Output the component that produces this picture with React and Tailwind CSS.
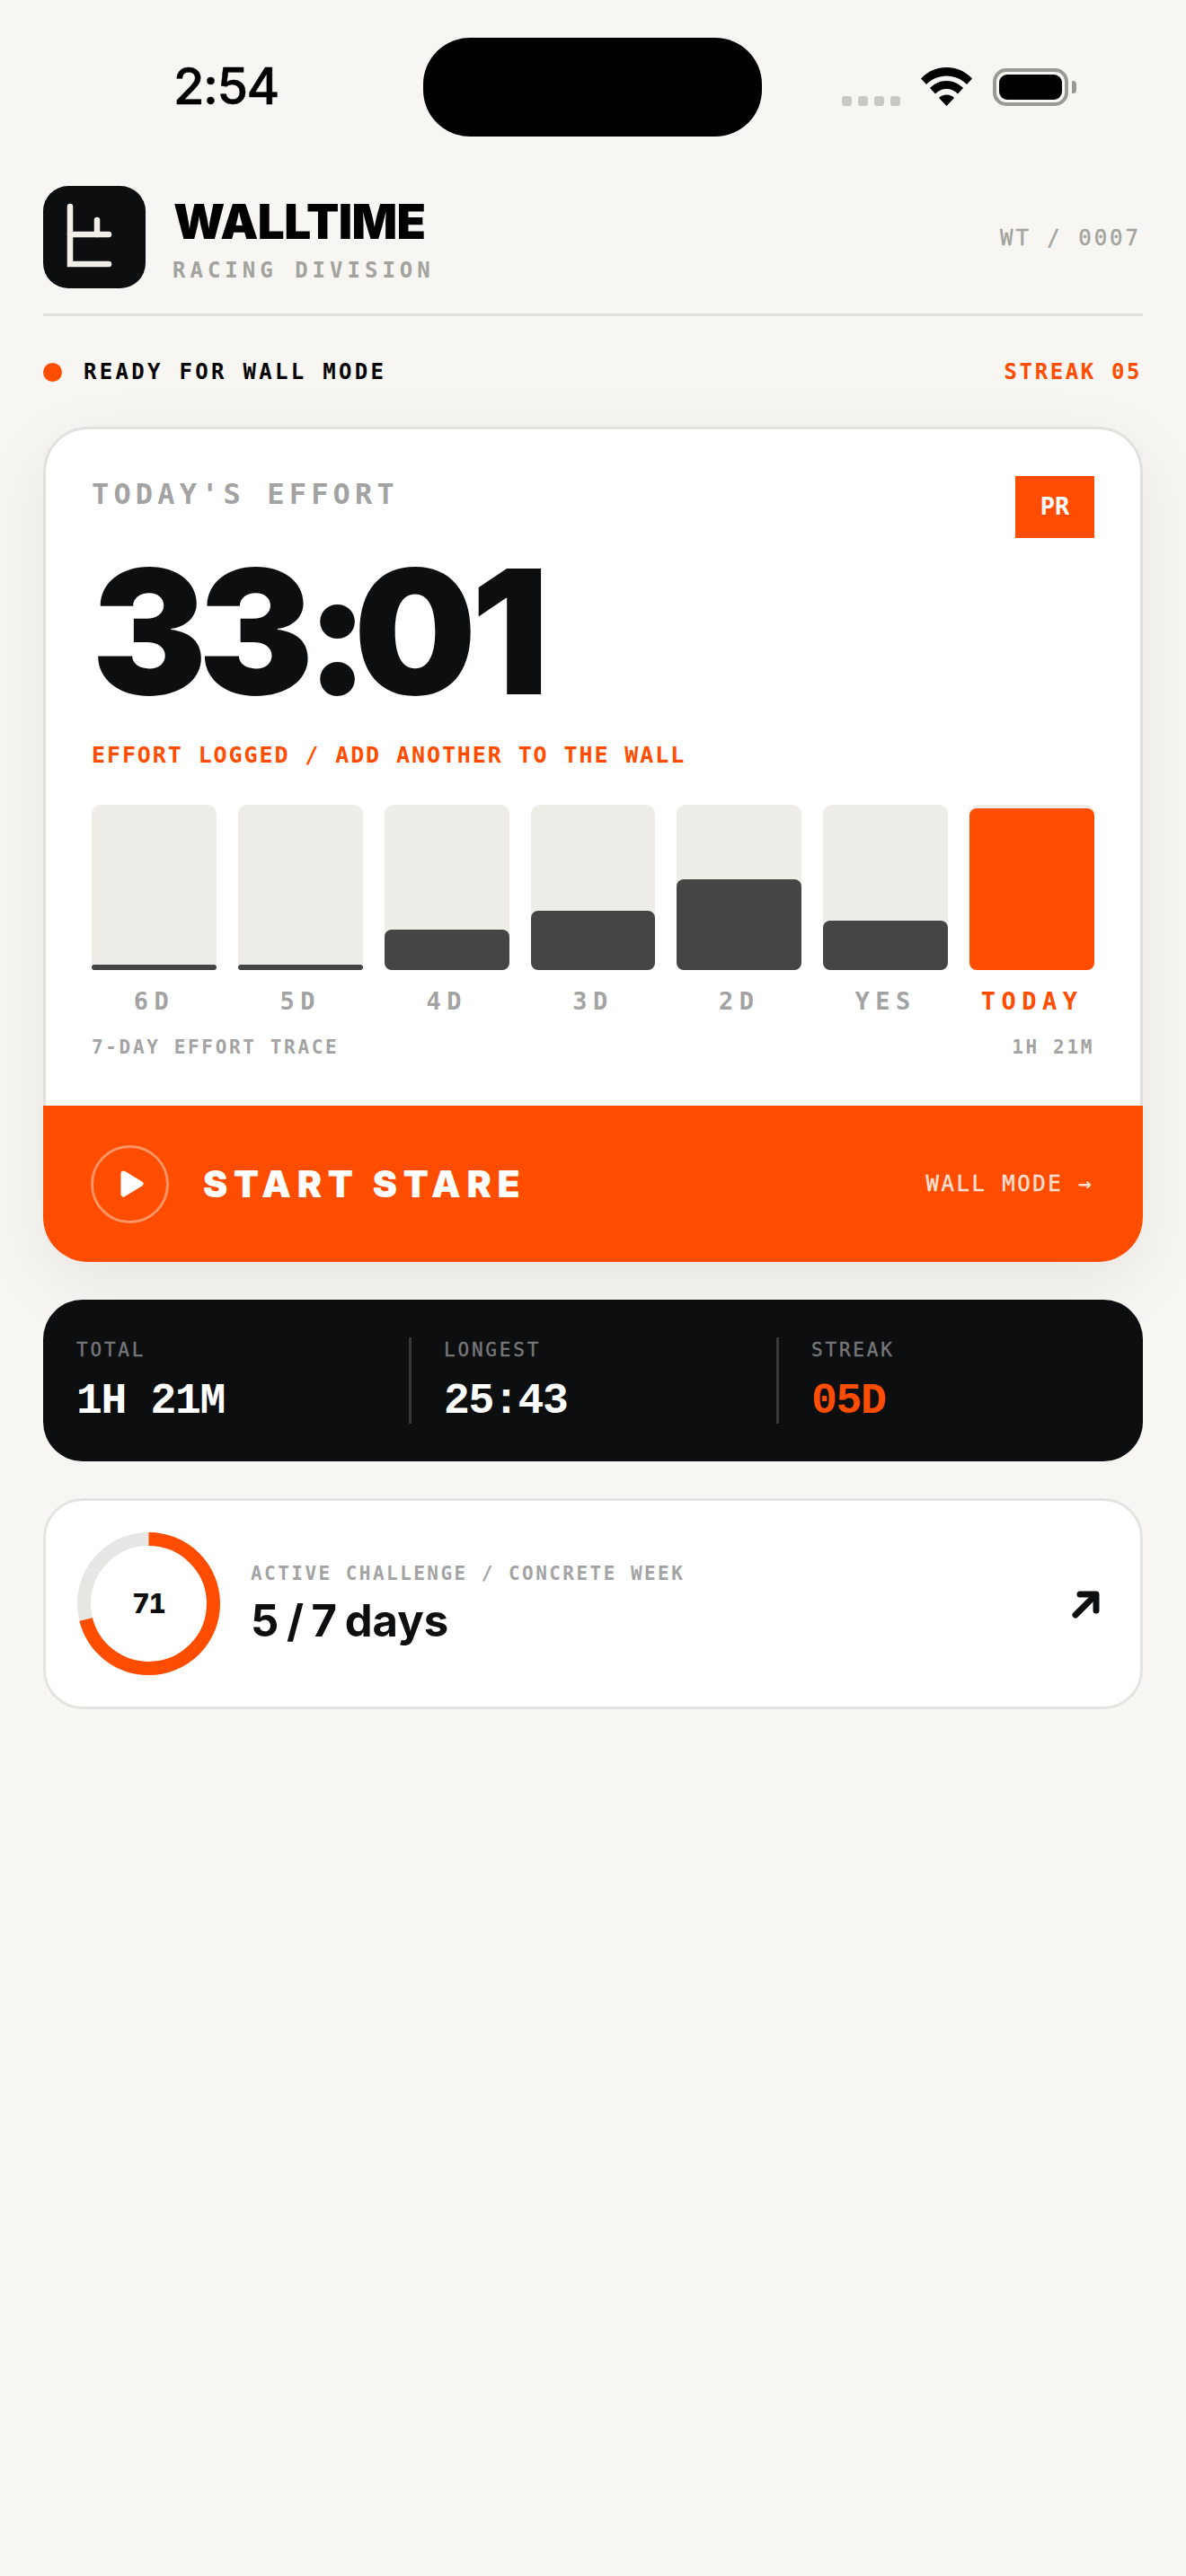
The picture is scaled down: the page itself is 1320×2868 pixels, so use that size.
const bars = [
  { label: '6D', fill: 6 },
  { label: '5D', fill: 6 },
  { label: '4D', fill: 45 },
  { label: '3D', fill: 66 },
  { label: '2D', fill: 101 },
  { label: 'YES', fill: 55 },
  { label: 'TODAY', fill: 180, today: true },
];

const stats = [
  { label: 'TOTAL', value: '1H 21M', width: 'w-[370px]' },
  { label: 'LONGEST', value: '25:43', width: 'w-[409px]', divider: true },
  { label: 'STREAK', value: '05D', accent: true, divider: true },
];

function StatusBar() {
  return (
    <div className="flex items-start pt-[42px] h-[207px]">
      <div className="w-[423px] pl-[145px] pt-[24px] font-['Inter',sans-serif] text-[56px] leading-[60px] font-medium tracking-[-1.5px] [-webkit-text-stroke:0.5px_#000] text-black">
        2:54
      </div>
      <div className="w-[377px] h-[110px] rounded-[52px] bg-black" />
      <div className="flex items-end ml-[89px] mt-[33px]">
        <div className="flex gap-[7px] mr-[23px]">
          <span className="w-[11px] h-[11px] rounded-[3px] bg-[#c9c9c4]" />
          <span className="w-[11px] h-[11px] rounded-[3px] bg-[#c9c9c4]" />
          <span className="w-[11px] h-[11px] rounded-[3px] bg-[#c9c9c4]" />
          <span className="w-[11px] h-[11px] rounded-[3px] bg-[#c9c9c4]" />
        </div>
        <svg width="57" height="43" viewBox="0 0 57 43" className="mr-[23px]">
          <path d="M0 12.5C8 4 18 0 28.5 0S49 4 57 12.5L51 19C45 13 37 9.5 28.5 9.5S12 13 6 19Z" fill="#000" />
          <path d="M10 23C15 18 21 15 28.5 15S42 18 47 23L41 29.5C38 26 33.5 24 28.5 24S19 26 16 29.5Z" fill="#000" />
          <path d="M20 34C22 32 25 30.5 28.5 30.5S35 32 37 34L28.5 43Z" fill="#000" />
        </svg>
        <div className="w-[84px] h-[42px] rounded-[15px] border-[4px] border-[#999994] p-[3px]">
          <div className="w-full h-full rounded-[9px] bg-black" />
        </div>
        <div className="w-[5px] h-[14px] ml-[4px] mb-[14px] rounded-r-[4px] bg-[#999994]" />
      </div>
    </div>
  );
}

function Logo() {
  return (
    <div className="w-[114px] h-[114px] rounded-[28px] bg-[#0c0e10] shrink-0">
      <svg width="114" height="114" viewBox="0 0 114 114" fill="none" stroke="#f2eee8" strokeWidth="6.5" strokeLinecap="round">
        <path d="M30 23V87H73" />
        <path d="M30 54H73" />
        <path d="M60 38V54" />
      </svg>
    </div>
  );
}

function Bar({ label, fill, today }) {
  return (
    <div className="flex-1">
      <div className="h-[184px] rounded-[10px] bg-[#eeede8] flex items-end">
        <div
          className={`w-full rounded-[8px] ${today ? 'bg-[#ff4d00]' : 'bg-[#454545]'}`}
          style={{ height: fill }}
        />
      </div>
      <div
        className={`mt-[22px] text-center text-[27px] leading-[26px] font-bold tracking-[6.5px] ${
          today ? 'text-[#ff4d00]' : 'text-[#a3a3a3]'
        }`}
      >
        {label}
      </div>
    </div>
  );
}

export default function App() {
  return (
    <div className="min-h-[2868px] bg-[#f7f6f2] px-12 font-['DejaVu_Sans_Mono',monospace]">
      <StatusBar />

      {/* Header */}
      <div className="flex items-start pb-[28px] border-b-[3px] border-[#dfdfdb]">
        <Logo />
        <div className="ml-[30px] flex-1">
          <div className="mt-[14px] ml-[1px] font-['Inter',sans-serif] text-[53px] leading-[53px] font-black tracking-[-0.6px] text-black">
            WALLTIME
          </div>
          <div className="mt-[15px] text-[24px] leading-[24px] font-bold tracking-[5px] text-[#a3a39e]">
            RACING DIVISION
          </div>
        </div>
        <div className="mt-[46px] mr-[2px] text-[24px] leading-[24px] tracking-[3px] [-webkit-text-stroke:0.4px_#a3a39e] text-[#a3a39e]">
          WT / 0007
        </div>
      </div>

      {/* Ready row */}
      <div className="flex items-center justify-between mt-[50px]">
        <div className="flex items-center">
          <span className="w-[21px] h-[21px] rounded-full bg-[#ff4d00]" />
          <span className="ml-[24px] text-[24px] leading-[24px] font-bold tracking-[3.3px] text-black">
            READY FOR WALL MODE
          </span>
        </div>
        <span className="mr-[1px] text-[24px] leading-[24px] font-bold tracking-[2.6px] text-[#ff4d00]">STREAK 05</span>
      </div>

      {/* Main card */}
      <div className="mt-[49px] rounded-[50px] shadow-[0_24px_80px_rgba(20,20,10,0.07)]">
        <div className="rounded-t-[50px] bg-white border-x-[3px] border-t-[3px] border-[#e0e0dc] px-[51px] pb-[54px]">
          <div className="flex items-start justify-between pt-[52px]">
            <div className="mt-[4px] text-[32px] leading-[32px] font-bold tracking-[5.15px] text-[#a3a3a3]">
              TODAY&apos;S EFFORT
            </div>
            <div className="w-[88px] h-[69px] flex items-center justify-center bg-[#ff4d00] text-[27px] font-bold text-white">
              PR
            </div>
          </div>
          <div className="mt-[8px] font-['Inter',sans-serif] text-[192px] leading-[192px] font-black tracking-[-9.6px] text-[#0c0e10]">
            33<span className="tracking-[-17.6px]">:</span>
            <span className="tracking-[-6px]">0</span>1
          </div>
          <div className="mt-[29px] text-[25px] leading-[25px] font-bold tracking-[1.9px] text-[#ff4d00] whitespace-nowrap">
            EFFORT LOGGED / ADD ANOTHER TO THE WALL
          </div>
          <div className="flex gap-[24px] mt-[43px]">
            {bars.map((bar) => (
              <Bar key={bar.label} {...bar} />
            ))}
          </div>
          <div className="flex justify-between mt-[28px] text-[21px] leading-[21px] font-bold tracking-[2.65px] text-[#a3a3a3]">
            <span>7-DAY EFFORT TRACE</span>
            <span>1H 21M</span>
          </div>
        </div>

        {/* Start button */}
        <div className="flex items-center justify-between h-[174px] pl-[53px] pr-[55px] rounded-b-[50px] bg-[#ff4d00]">
          <div className="flex items-center">
            <div className="w-[87px] h-[87px] rounded-full border-[3px] border-white/40 flex items-center justify-center">
              <svg width="26" height="30" viewBox="0 0 26 30" className="ml-[5px]">
                <path d="M3.5 3.5L22.5 15L3.5 26.5Z" fill="#fff" stroke="#fff" strokeWidth="6" strokeLinejoin="round" />
              </svg>
            </div>
            <div className="ml-[38px] font-['Inter',sans-serif] text-[41px] leading-[41px] font-black tracking-[6.8px] text-white">
              START STARE
            </div>
          </div>
          <div className="text-[24px] leading-[24px] tracking-[2.5px] [-webkit-text-stroke:0.4px_rgba(255,255,255,0.8)] text-white/80">
            WALL MODE →
          </div>
        </div>
      </div>

      {/* Stats */}
      <div className="mt-[42px] h-[180px] rounded-[44px] bg-[#0c0e10] flex pl-[37px] pt-[42px]">
        {stats.map((stat) => (
          <div
            key={stat.label}
            className={`h-[96px] ${stat.width || ''} ${stat.divider ? 'border-l-[3px] border-[#36383a] pl-[36px]' : ''}`}
          >
            <div className="mt-[4px] text-[21px] leading-[21px] tracking-[2.8px] [-webkit-text-stroke:0.4px_#77777a] text-[#77777a]">
              {stat.label}
            </div>
            <div
              className={`mt-[24px] font-['Liberation_Mono',monospace] text-[48px] leading-[44px] font-bold tracking-[-1.3px] ${
                stat.accent ? 'text-[#ff4d00]' : 'text-white'
              }`}
            >
              {stat.value}
            </div>
          </div>
        ))}
      </div>

      {/* Active challenge */}
      <div className="mt-[41px] h-[235px] rounded-[44px] bg-white border-[3px] border-[#e3e3e0] flex items-center pl-[35px] pr-[44px]">
        <div className="relative w-[159px] h-[159px] shrink-0">
          <svg width="159" height="159" viewBox="0 0 159 159" className="-rotate-90">
            <circle cx="79.5" cy="79.5" r="72" fill="none" stroke="#e6e6e4" strokeWidth="15" />
            <circle cx="79.5" cy="79.5" r="72" fill="none" stroke="#ff4d00" strokeWidth="15" strokeDasharray="321 452" />
          </svg>
          <div className="absolute inset-0 flex items-center justify-center font-['Inter',sans-serif] text-[30px] font-extrabold tabular-nums tracking-[-1px] text-[#0c0e10]">
            71
          </div>
        </div>
        <div className="ml-[34px] flex-1">
          <div className="text-[21px] leading-[21px] font-bold tracking-[2.46px] text-[#a3a3a3]">
            ACTIVE CHALLENGE / CONCRETE WEEK
          </div>
          <div className="mt-[18px] font-['Inter',sans-serif] text-[49px] leading-[48px] font-bold [word-spacing:-3px] text-[#0c0e10]">
            5 / 7 days
          </div>
        </div>
        <svg width="32" height="32" viewBox="0 0 32 32" fill="none" stroke="#0c0e10" strokeWidth="7" strokeLinecap="round" strokeLinejoin="round">
          <path d="M4 28L26 6" />
          <path d="M9 5H27V23" />
        </svg>
      </div>
    </div>
  );
}
